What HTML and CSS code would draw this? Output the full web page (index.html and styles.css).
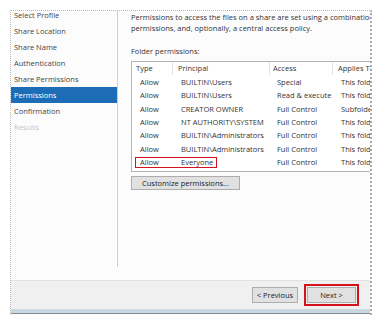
FILE: index.html
```html
<!DOCTYPE html>
<html>
<head>
<meta charset="utf-8">
<link rel="stylesheet" href="styles.css">
</head>
<body>
<div class="window">
  <div class="main">
    <nav class="nav">
      <div class="nav-item">Select Profile</div>
      <div class="nav-item">Share Location</div>
      <div class="nav-item">Share Name</div>
      <div class="nav-item">Authentication</div>
      <div class="nav-item">Share Permissions</div>
      <div class="nav-item active">Permissions</div>
      <div class="nav-item">Confirmation</div>
      <div class="nav-item disabled">Results</div>
    </nav>
    <section class="content">
      <p class="intro">Permissions to access the files on a share are set using a combination of folder permissions, share<br>permissions, and, optionally, a central access policy.</p>
      <p class="label">Folder permissions:</p>
      <div class="list">
        <div class="row head">
          <div class="cell">Type</div>
          <div class="cell">Principal</div>
          <div class="cell">Access</div>
          <div class="cell">Applies To</div>
        </div>
        <div class="row"><div class="cell">Allow</div><div class="cell">BUILTIN\Users</div><div class="cell">Special</div><div class="cell">This folder only</div></div>
        <div class="row"><div class="cell">Allow</div><div class="cell">BUILTIN\Users</div><div class="cell">Read &amp; execute</div><div class="cell">This folder, subfolders</div></div>
        <div class="row"><div class="cell">Allow</div><div class="cell">CREATOR OWNER</div><div class="cell">Full Control</div><div class="cell">Subfolders and files</div></div>
        <div class="row"><div class="cell">Allow</div><div class="cell">NT AUTHORITY\SYSTEM</div><div class="cell">Full Control</div><div class="cell">This folder, subfolders</div></div>
        <div class="row"><div class="cell">Allow</div><div class="cell">BUILTIN\Administrators</div><div class="cell">Full Control</div><div class="cell">This folder, subfolders</div></div>
        <div class="row"><div class="cell">Allow</div><div class="cell">BUILTIN\Administrators</div><div class="cell">Full Control</div><div class="cell">This folder only</div></div>
        <div class="row marked"><div class="cell">Allow</div><div class="cell">Everyone</div><div class="cell">Full Control</div><div class="cell">This folder, subfolders</div><span class="mark"></span></div>
      </div>
      <button class="btn customize">Customize permissions...</button>
    </section>
  </div>
  <footer class="footer">
    <button class="btn prev">&lt; Previous</button>
    <span class="next-wrap"><button class="btn next">Next &gt;</button></span>
  </footer>
  <div class="bottom-band"></div>
</div>
</body>
</html>
```
FILE: styles.css
```css
html, body {
  margin: 0;
  padding: 0;
  background: #ffffff;
}
body {
  font-family: "Open Sans", "Noto Sans", sans-serif;
  font-size: 7.5px;
  color: #333;
}
.window {
  margin: 10px 0 0 10px;
  width: 359px;
  height: 304px;
  background: #fcfcfc;
  border-top: 1px dotted #b8b8b8;
  border-left: 1px dotted #b8b8b8;
  border-right: 2px dotted #a8a8a8;
  display: flex;
  flex-direction: column;
  overflow: hidden;
}
.main {
  display: flex;
  height: 269px;
}
.nav {
  width: 106px;
  margin-top: -4px;
  height: 260px;
  border-right: 1px solid #cfcfcf;
  flex-shrink: 0;
}
.nav-item {
  height: 16px;
  line-height: 16px;
  padding-left: 3px;
  color: #444;
  white-space: nowrap;
}
.nav-item.active {
  background: #1c6db5;
  color: #fff;
}
.nav-item.disabled {
  color: #c4c4c4;
}
.content {
  flex: 1;
  padding-left: 13px;
  overflow: hidden;
  min-width: 0;
}
.intro {
  margin: 1px 0 0 0;
  line-height: 11px;
  white-space: nowrap;
}
.label {
  margin: 12px 0 0 0;
  line-height: 11px;
}
.list {
  margin-top: 4px;
  width: 280px;
  border: 1px solid #b4b4b4;
  border-right: none;
  background: #fff;
  padding-bottom: 2px;
}
.row {
  display: grid;
  grid-template-columns: 41px 97px 63px 80px;
  height: 13.33px;
  line-height: 13.33px;
  position: relative;
}
.row .cell {
  padding-left: 8px;
  white-space: nowrap;
  overflow: hidden;
}
.row .cell:nth-child(3) { padding-left: 7px; }
.row.head {
  height: 13px;
  line-height: 13px;
  margin-bottom: 1px;
}
.row.head .cell {
  padding-left: 4px;
  border-right: 1px solid #e2e2e2;
}
.row.head .cell:nth-child(2) { padding-left: 5px; }
.row.head .cell:nth-child(3) { padding-left: 3px; }
.row.head .cell:nth-child(4) { padding-left: 5px; border-right: none; }
.mark {
  position: absolute;
  left: 3px;
  top: 1.5px;
  width: 80px;
  height: 8.5px;
  border: 1.5px solid #d2121c;
}
.btn {
  font-family: inherit;
  font-size: 7.5px;
  color: #222;
  background: #e1e1e1;
  border: 1px solid #adadad;
  padding: 0;
  margin: 0;
  height: 14px;
  line-height: 12px;
}
.customize {
  margin-top: 4px;
  width: 109px;
  display: block;
}
.footer {
  height: 28px;
  background: #f0f0f0;
  border-top: 1px solid #e2e2e2;
  display: flex;
  align-items: center;
  justify-content: flex-end;
  padding-right: 11px;
}
.prev {
  width: 46px;
  height: 16px;
  margin-right: 6px;
}
.next-wrap {
  border: 2px solid #d2121c;
  padding: 1px;
  display: flex;
}
.next {
  width: 49px;
  height: 16px;
}
.bottom-band {
  height: 4px;
  background: #c9d7e1;
  border-bottom: 1px solid #8a8a8a;
}
```
